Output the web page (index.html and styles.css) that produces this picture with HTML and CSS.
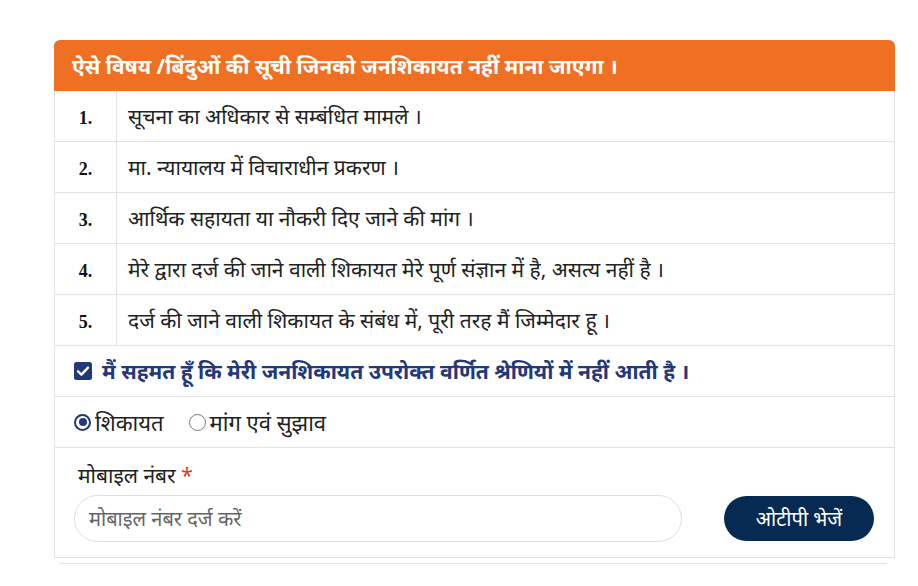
FILE: index.html
```html
<!DOCTYPE html>
<html lang="hi">
<head>
<meta charset="utf-8">
<title>जनशिकायत</title>
<link rel="stylesheet" href="styles.css">
</head>
<body>
<div class="page">
  <div class="card">
    <div class="card-head">ऐसे विषय /बिंदुओं की सूची जिनको जनशिकायत नहीं माना जाएगा ।</div>
    <div class="row"><div class="num">1.</div><div class="txt">सूचना का अधिकार से सम्बंधित मामले ।</div></div>
    <div class="row"><div class="num">2.</div><div class="txt">मा. न्यायालय में विचाराधीन प्रकरण ।</div></div>
    <div class="row"><div class="num">3.</div><div class="txt">आर्थिक सहायता या नौकरी दिए जाने की मांग ।</div></div>
    <div class="row"><div class="num">4.</div><div class="txt">मेरे द्वारा दर्ज की जाने वाली शिकायत मेरे पूर्ण संज्ञान में है, असत्य नहीं है ।</div></div>
    <div class="row"><div class="num">5.</div><div class="txt">दर्ज की जाने वाली शिकायत के संबंध में, पूरी तरह मैं जिम्मेदार हू ।</div></div>
    <div class="agree">
      <span class="checkbox"><svg viewBox="0 0 18 18" width="18" height="18"><rect x="0" y="0" width="18" height="18" rx="2.5" fill="#22387a"/><path d="M4 9.3 L7.4 12.6 L14 5.6" fill="none" stroke="#fff" stroke-width="2.4" stroke-linecap="round" stroke-linejoin="round"/></svg></span>
      <span>मैं सहमत हूँ कि मेरी जनशिकायत उपरोक्त वर्णित श्रेणियों में नहीं आती है ।</span>
    </div>
    <div class="radios">
      <label class="radio"><span class="dot on"></span>शिकायत</label>
      <label class="radio"><span class="dot"></span>मांग एवं सुझाव</label>
    </div>
    <div class="mobile">
      <div class="label">मोबाइल नंबर <span class="req">*</span></div>
      <div class="field-row">
        <div class="input">मोबाइल नंबर दर्ज करें</div>
        <button class="btn">ओटीपी भेजें</button>
      </div>
    </div>
  </div>
  <div class="foot-line"></div>
</div>
</body>
</html>
```
FILE: styles.css
```css
* { box-sizing: border-box; }
body {
  margin: 0;
  background: #fff;
  font-family: "Noto Sans", "Liberation Sans", sans-serif;
  color: #222;
}
.page {
  padding: 40px 24px 0 54px;
  width: 918px;
}
.card {
  width: 841px;
  border: 1px solid #e2e2e2;
  border-top: none;
  border-radius: 6px 6px 0 0;
}
.card-head {
  background: #f07023;
  color: #fff;
  font-weight: 700;
  font-size: 21px;
  height: 51px;
  padding: 0 18px;
  display: flex;
  align-items: center;
  border-radius: 6px 6px 0 0;
  margin: 0 -1px;
}
.row {
  display: flex;
  height: 51px;
  border-bottom: 1px solid #e2e2e2;
}
.num {
  width: 62px;
  border-right: 1px solid #e2e2e2;
  display: flex;
  align-items: center;
  justify-content: center;
  font-family: "Liberation Serif", serif;
  font-weight: 700;
  font-size: 18px;
  color: #111;
  padding-top: 4px;
}
.txt {
  flex: 1;
  display: flex;
  align-items: center;
  padding-left: 11px;
  font-size: 21px;
  color: #222;
}
.agree {
  height: 51px;
  border-bottom: 1px solid #e2e2e2;
  display: flex;
  align-items: center;
  gap: 10px;
  padding-left: 19px;
  font-weight: 700;
  font-size: 21px;
  color: #22387a;
}
.checkbox { display: flex; }
.radios {
  height: 51px;
  border-bottom: 1px solid #e2e2e2;
  display: flex;
  align-items: center;
  padding-left: 19px;
  gap: 25px;
  font-size: 22px;
  color: #222;
}
.radio { display: flex; align-items: center; gap: 4px; }
.dot {
  width: 17px;
  height: 17px;
  border-radius: 50%;
  border: 1px solid #777;
  background: #fff;
  display: inline-block;
  position: relative;
}
.dot.on {
  border: 2px solid #22387a;
}
.dot.on::after {
  content: "";
  position: absolute;
  left: 2.5px; top: 2.5px;
  width: 8px; height: 8px;
  border-radius: 50%;
  background: #22387a;
}
.mobile {
  padding: 13px 20px 15px 19px;
}
.label {
  font-size: 21px;
  color: #222;
  padding-left: 4px;
  margin-bottom: 6px;
  line-height: 28px;
}
.req { color: #e0352b; }
.field-row {
  display: flex;
  align-items: center;
  justify-content: space-between;
}
.input {
  width: 608px;
  height: 47px;
  border: 1px solid #dedede;
  border-radius: 24px;
  display: flex;
  align-items: center;
  padding-left: 14px;
  font-size: 20px;
  color: #666;
}
.btn {
  width: 150px;
  height: 45px;
  border: none;
  border-radius: 23px;
  background: #062a52;
  color: #fff;
  font-family: "Noto Sans", "Liberation Sans", sans-serif;
  font-size: 20px;
}
.foot-line {
  width: 828px;
  margin-left: 5px;
  margin-top: 5px;
  border-top: 1px solid #e2e2e2;
}
```
